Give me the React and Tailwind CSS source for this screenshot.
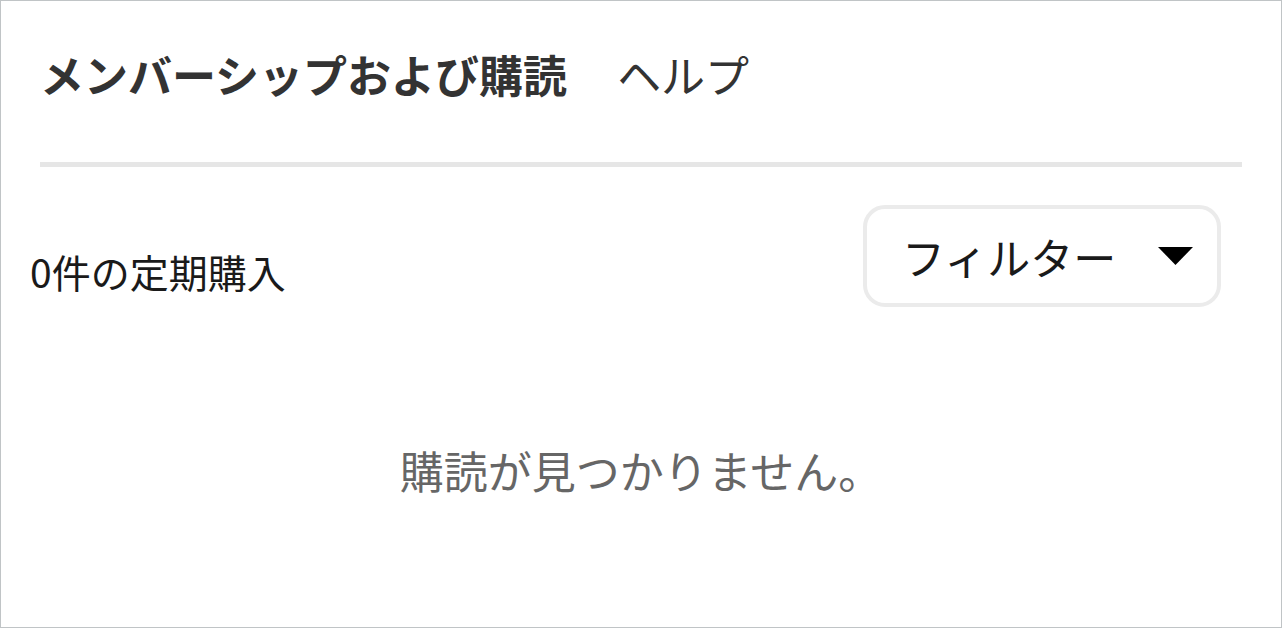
export default function App() {
  return (
    <div
      className="w-[1282px] h-[628px] border border-[#c0c4c6] bg-white overflow-hidden"
      style={{ fontFamily: '"Noto Sans CJK JP", "Noto Sans", sans-serif' }}
    >
      {/* Tabs */}
      <div className="flex items-center gap-[50px] pl-[39px] pt-[51px]">
        <span className="text-[44px] leading-[44px] font-bold text-[#333333]">メンバーシップおよび購読</span>
        <span className="text-[44px] leading-[44px] text-[#333333]">ヘルプ</span>
      </div>

      <div className="mx-[39px] mt-[66px] h-[5px] bg-[#e6e6e6]" />

      {/* Count + filter */}
      <div className="flex justify-between items-start pl-[29px] pr-[60px] mt-[38px]">
        <span className="mt-[47px] text-[39px] leading-[39px] text-[#1a1a1a]">0件の定期購入</span>
        <button className="w-[358px] h-[102px] border-4 border-[#ebebeb] rounded-[22px] flex items-center pl-[35px] bg-white">
          <span className="text-[43px] leading-[43px] text-[#1a1a1a]">フィルター</span>
          <svg className="ml-[42px]" width="35" height="18" viewBox="0 0 35 18">
            <path d="M0 0 H35 L17.5 18 Z" fill="#000" />
          </svg>
        </button>
      </div>

      {/* Empty state */}
      <p className="mt-[141px] text-center text-[44px] leading-[44px] text-[#666666]">購読が見つかりません。</p>
    </div>
  )
}
